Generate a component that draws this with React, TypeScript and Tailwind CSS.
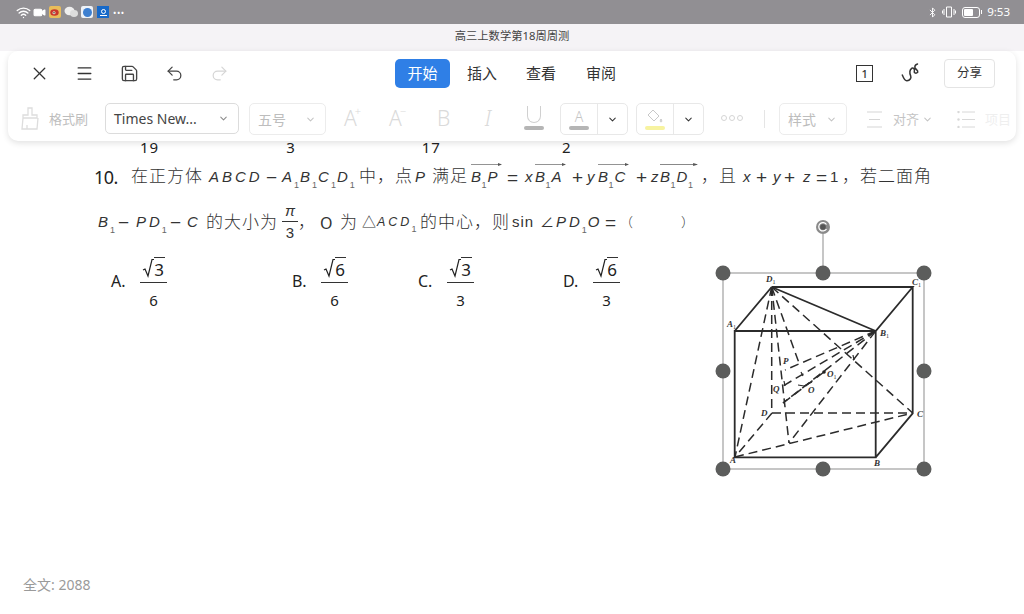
import { Bluetooth, ChevronDown, Menu, Redo2, Save, Undo2, Video, Wifi, X } from "lucide-react"
import type { ReactNode } from "react"

function Caret({ className = "text-[#8a8a8a]" }: { className?: string }) {
  return <ChevronDown size={11} strokeWidth={2.2} className={className} />
}

function Var({ children, className = "" }: { children: ReactNode; className?: string }) {
  return <span className={`shrink-0 italic tracking-[3px] whitespace-nowrap ${className}`}>{children}</span>
}

function Sub({ children = "1" }: { children?: ReactNode }) {
  return <span className="relative top-[6px] ml-[-1px] mr-[1px] text-[9px] not-italic tracking-normal text-[#666]">{children}</span>
}

function Op({ children, className = "" }: { children: ReactNode; className?: string }) {
  return <span className={`shrink-0 text-[19px] leading-none whitespace-nowrap ${className}`}>{children}</span>
}

function Vec({ children, className = "" }: { children: ReactNode; className?: string }) {
  return (
    <span className={`relative shrink-0 italic tracking-[1.5px] whitespace-nowrap ${className}`}>
      {children}
      <svg className="absolute left-0 top-[-4px] h-[5px] w-full" preserveAspectRatio="none" viewBox="0 0 31 5">
        <path d="M0 2.500H30" stroke="#666" strokeWidth="0.7" fill="none" />
        <path d="M27 1l4 1.500-4 1.500z" fill="#555" />
      </svg>
    </span>
  )
}

function Cjk({ children, className = "" }: { children: ReactNode; className?: string }) {
  return <span className={`shrink-0 text-[17px] font-light tracking-[1px] whitespace-nowrap ${className}`}>{children}</span>
}

function Root({ n }: { n: string }) {
  return (
    <span className="flex items-start text-[17px] leading-[22px]">
      <svg width="12" height="22" viewBox="0 0 12 22">
        <path d="M1 13l2-1 3 7L10 2.500h2" fill="none" stroke="#222" strokeWidth="1.200" />
      </svg>
      <span className="h-[22px] border-t border-[#333] pr-[1px] pt-[1px] leading-[21px]">{n}</span>
    </span>
  )
}

function Option({ label, n, d, labelW, className = "" }: { label: string; n: string; d: string; labelW: string; className?: string }) {
  return (
    <div className={`flex items-start ${className}`}>
      <span className={`pt-[13px] text-[16px] leading-[22px] ${labelW}`}>{label}</span>
      <div className="flex w-[27px] flex-col items-center">
        <div className="flex w-full justify-center border-b border-[#333] pb-[3px]">
          <Root n={n} />
        </div>
        <span className="text-[15px] leading-[34px]">{d}</span>
      </div>
    </div>
  )
}

function Figure() {
  const dashed = [
    "M771.700 287L735 457", "M771.700 287V413", "M771.700 287L789 443", "M771.700 287L799 363", "M771.700 287L912.700 413",
    "M875.700 331L783 386", "M875.700 331L785 370", "M875.700 331L783 403", "M875.700 331L789 443",
    "M772 413H912.700", "M772 413L735 457", "M735 457L912.700 413", "M783 403L824 372",
  ]
  const solid = "M771.700 287H912.700L875.700 331H734.700V457.300H875.700V331M771.700 287L734.700 331M771.700 287L875.700 331M912.700 287V413.300L875.700 457.300"
  const handles = [[723, 273], [823, 273], [924, 273], [723, 371], [924, 371], [723, 469], [823, 469], [924, 469]]
  const labels: [string, string, number, number][] = [
    ["D", "1", 766, 282], ["A", "1", 727, 327], ["C", "1", 912, 285], ["B", "1", 880, 336], ["P", "", 783, 364], ["Q", "", 773, 392],
    ["O", "1", 827, 377], ["O", "", 808, 393], ["D", "", 761, 416], ["C", "", 917, 417], ["A", "", 730, 463], ["B", "", 874, 466],
  ]
  return (
    <svg className="absolute left-[700px] top-[74px] h-[265px] w-[250px]" viewBox="700 215 250 265">
      <path d="M723 273H924V469H723zM823 234V273" fill="none" stroke="#8d8d8d" strokeWidth="1" />
      <path d={solid} fill="none" stroke="#2b2b2b" strokeWidth="1.800" />
      {dashed.map((d) => (
        <path key={d} d={d} fill="none" stroke="#2b2b2b" strokeWidth="1.500" strokeDasharray="9 5" />
      ))}
      <path d="M798 385l6 1 8-4M784 381l1 5M801 372l2 4M853 355l1 5" fill="none" stroke="#2b2b2b" strokeWidth="1.200" />
      <circle cx="824" cy="372" r="1.800" fill="#222" />
      {labels.map(([t, s, x, y], i) => (
        <text key={i} x={x} y={y} fontSize="9" fontStyle="italic" fontWeight="bold" fontFamily="Liberation Serif" fill="#333">
          {t}
          {s && <tspan dy="2" fontSize="6" fontStyle="normal" fontWeight="normal">{s}</tspan>}
        </text>
      ))}
      {handles.map(([x, y]) => (
        <circle key={`${x}-${y}`} cx={x} cy={y} r="7.500" fill="#5c5d5c" />
      ))}
      <circle cx="823" cy="227" r="7" fill="#8a8a8a" />
      <path d="M826.500 229a4.200 4.200 0 1 1 0-4.500" fill="none" stroke="#fff" strokeWidth="1.200" />
      <circle cx="823" cy="227" r="2.800" fill="#555" />
    </svg>
  )
}

export default function App() {
  return (
    <div className="flex h-[614px] w-[1024px] flex-col overflow-hidden bg-white text-[#222] [font-family:'Noto_Sans','Noto_Sans_CJK_SC',sans-serif]">
      {/* status bar */}
      <div className="flex h-[24px] shrink-0 items-center bg-[#918f93] pl-[16px] pr-[14px] text-white">
        <Wifi size={15} strokeWidth={2.200} />
        <Video size={13} fill="white" className="ml-[2px]" />
        <span className="ml-[3px] flex h-[12px] w-[12px] items-center justify-center rounded-[2px] bg-[#e9bd5a]">
          <svg width="10" height="8" viewBox="0 0 10 8">
            <ellipse cx="4.500" cy="4.500" rx="4.200" ry="3.200" fill="#c8352c" />
            <circle cx="4" cy="4.800" r="1.500" fill="#f5e6d0" />
            <circle cx="4" cy="4.800" r=".7" fill="#222" />
          </svg>
        </span>
        <svg className="ml-[3px]" width="14" height="12" viewBox="0 0 14 12">
          <ellipse cx="5.500" cy="5" rx="5" ry="4.200" fill="#eee" />
          <ellipse cx="10" cy="7.500" rx="4" ry="3.400" fill="#ddd" />
        </svg>
        <span className="ml-[3px] flex h-[12px] w-[12px] items-center justify-center rounded-[2px] bg-[#eef2f8]">
          <span className="h-[9px] w-[9px] rounded-full bg-[#3d7fd0]" />
        </span>
        <span className="ml-[4px] flex h-[12px] w-[12px] flex-col items-center justify-center gap-[1px] bg-[#1769c9]">
          <span className="h-[5px] w-[5px] rounded-full border border-white" />
          <span className="h-px w-[7px] bg-white" />
        </span>
        <span className="ml-[4px] text-[9px] leading-none tracking-[0.500px]">•••</span>
        <div className="ml-auto flex items-center">
          <Bluetooth size={11} strokeWidth={2} />
          <svg className="ml-[4px]" width="14" height="12" viewBox="0 0 14 12">
            <path d="M4.500 1h5v10h-5zM2 3v6M12 3v6M.5 4.500v3M13.500 4.500v3" fill="none" stroke="white" strokeWidth="1" />
          </svg>
          <span className="ml-[6px] flex h-[11px] w-[18px] items-center rounded-[3px] border border-white p-[1px]">
            <span className="h-full w-[9px] rounded-[1px] bg-white" />
          </span>
          <span className="ml-[1px] h-[4px] w-[1px] bg-white" />
          <span className="ml-[5px] text-[11.500px] leading-none">9:53</span>
        </div>
      </div>

      {/* title */}
      <div className="flex h-[27px] shrink-0 items-center justify-center bg-[#f5f3f6] pb-[3px] text-[11.300px] text-[#444]">
        高三上数学第18周周测
      </div>

      {/* toolbar */}
      <div className="z-10 mx-[8px] flex h-[90px] shrink-0 flex-col rounded-[10px] bg-white shadow-[0_2px_6px_rgba(0,0,0,0.12)]">
        <div className="flex h-[44px] items-center pl-[9px]">
          <span className="flex w-[45px] justify-center"><X size={21} strokeWidth={1.500} className="text-[#333]" /></span>
          <span className="flex w-[45px] justify-center"><Menu size={19} strokeWidth={1.600} className="text-[#333]" /></span>
          <span className="flex w-[45px] justify-center"><Save size={19} strokeWidth={1.700} className="text-[#444]" /></span>
          <span className="flex w-[45px] justify-center"><Undo2 size={19} strokeWidth={1.600} className="text-[#444]" /></span>
          <span className="flex w-[45px] justify-center"><Redo2 size={19} strokeWidth={1.500} className="text-[#d5d5d5]" /></span>
          <div className="ml-[153px] flex h-[29px] w-[55px] items-center justify-center rounded-[5px] bg-[#2f7fe6] text-[15px] text-white">开始</div>
          <span className="ml-[17px] text-[15px] text-[#333]">插入</span>
          <span className="ml-[29px] text-[15px] text-[#333]">查看</span>
          <span className="ml-[30px] text-[15px] text-[#333]">审阅</span>
          <span className="ml-[240px] flex h-[17px] w-[17px] items-center justify-center border-[1.500px] border-[#333] text-[11px] font-medium leading-none text-[#333]">1</span>
          <svg className="ml-[28px]" width="20" height="20" viewBox="0 0 20 20">
            <path d="M1.300 12C2.500 15 4 18 6 17.700 9 17.500 10.500 15 9.700 13 8.500 10 8.500 7 10.700 5.300 12.500 4.500 14 6 13.300 8.500 13 10.500 15.500 10.500 16.700 9.300 17.500 7.500 15 6.500 14 5 13.500 3 15 1.500 16.500 1" fill="none" stroke="#333" strokeWidth="1.500" strokeLinecap="round" />
          </svg>
          <span className="ml-[23px] flex h-[29px] w-[51px] items-center justify-center rounded-[4px] border border-[#e4e4e4] text-[12.500px] text-[#333]">分享</span>
        </div>

        <div className="flex h-[46px] items-start pl-[11px] pt-[8px]">
          <svg className="mt-[4px] shrink-0" width="22" height="24" viewBox="0 0 22 24">
            <path d="M9 1h4v7h5v3H4V8h5zM4 11l-1 11h15l1-11M8 22v-4" fill="none" stroke="#ddd" strokeWidth="1.300" />
          </svg>
          <span className="ml-[8px] mt-[7px] shrink-0 text-[13px] text-[#bdbdbd]">格式刷</span>
          <div className="ml-[17px] flex h-[31px] w-[134px] shrink-0 items-center justify-between rounded-[5px] border border-[#dcdcdc] pl-[8px] pr-[9px] text-[14px] text-[#444]">
            Times New...
            <Caret />
          </div>
          <div className="ml-[10px] flex h-[32px] w-[77px] shrink-0 items-center justify-between rounded-[5px] border border-[#ececec] pl-[8px] pr-[9px] text-[14px] text-[#bdbdbd]">
            五号
            <Caret className="text-[#c4c4c4]" />
          </div>
          <span className="ml-[18px] mt-[3px] flex w-[21px] shrink-0 text-[21px] font-light leading-[24px] text-[#dadada]">A<sup className="ml-[-2px] mt-[4px] text-[11px] leading-none">+</sup></span>
          <span className="ml-[24px] mt-[3px] flex w-[21px] shrink-0 text-[21px] font-light leading-[24px] text-[#dadada]">A<sup className="ml-[-2px] mt-[4px] text-[11px] leading-none">−</sup></span>
          <span className="ml-[27px] mt-[3px] w-[13px] shrink-0 text-[21px] font-light leading-[24px] text-[#dadada]">B</span>
          <span className="ml-[31px] mt-[3px] flex w-[14px] shrink-0 justify-center text-[21px] font-light italic leading-[24px] text-[#dadada]">I</span>
          <div className="ml-[28px] mt-[3px] flex w-[21px] shrink-0 flex-col items-center">
            <span className="h-[17px] w-[14px] rounded-b-[7px] border-x border-b border-[#d0d0d0]" />
            <span className="mt-[3px] h-[4px] w-[20px] rounded-full bg-[#b5b5b5]" />
          </div>
          <div className="ml-[16px] flex h-[32px] w-[68px] shrink-0 rounded-[5px] border border-[#e8e8e8]">
            <div className="flex w-[37px] flex-col items-center justify-center border-r border-[#e8e8e8]">
              <span className="text-[14px] font-light leading-[15px] text-[#c4c4c4]">A</span>
              <span className="mt-[2px] h-[4px] w-[20px] rounded-full bg-[#b5b5b5]" />
            </div>
            <div className="flex flex-1 items-center justify-center"><Caret className="text-[#333]" /></div>
          </div>
          <div className="ml-[8px] flex h-[32px] w-[68px] shrink-0 rounded-[5px] border border-[#e8e8e8]">
            <div className="flex w-[37px] flex-col items-center justify-center border-r border-[#e8e8e8]">
              <svg width="18" height="15" viewBox="0 0 18 15">
                <path d="M2 6l5-5 6 6-5 5zM15 10c1 1.500 1 3 0 3s-1-1.500 0-3z" fill="none" stroke="#c8c8c8" strokeWidth="1" />
              </svg>
              <span className="mt-[2px] h-[4px] w-[20px] rounded-full bg-[#f7f3a0]" />
            </div>
            <div className="flex flex-1 items-center justify-center"><Caret className="text-[#333]" /></div>
          </div>
          <span className="ml-[17px] mt-[12px] flex shrink-0 gap-[2px]">
            <span className="h-[6px] w-[6px] rounded-full border border-[#d5d5d5]" />
            <span className="h-[6px] w-[6px] rounded-full border border-[#d5d5d5]" />
            <span className="h-[6px] w-[6px] rounded-full border border-[#d5d5d5]" />
          </span>
          <span className="ml-[21px] mt-[7px] h-[18px] w-px shrink-0 bg-[#e5e5e5]" />
          <div className="ml-[14px] flex h-[32px] w-[68px] shrink-0 items-center justify-between rounded-[5px] border border-[#ececec] pl-[8px] pr-[9px] text-[14px] text-[#bdbdbd]">
            样式
            <Caret className="text-[#c4c4c4]" />
          </div>
          <svg className="ml-[20px] mt-[8px] shrink-0" width="15" height="17" viewBox="0 0 15 17">
            <path d="M0 1H15M2 8.500H13M0 16H15" stroke="#d5d5d5" strokeWidth="1" />
          </svg>
          <span className="ml-[11px] mt-[7px] shrink-0 text-[13px] text-[#c4c4c4]">对齐</span>
          <Caret className="ml-[3px] mt-[11px] shrink-0 text-[#c4c4c4]" />
          <svg className="ml-[24px] mt-[8px] shrink-0" width="18" height="17" viewBox="0 0 18 17">
            <path d="M5 1H18M5 8.500H18M5 16H18" stroke="#d8d8d8" strokeWidth="1" />
            <circle cx="1.500" cy="1" r="1.200" fill="#d8d8d8" />
            <circle cx="1.500" cy="8.500" r="1.200" fill="#d8d8d8" />
            <circle cx="1.500" cy="16" r="1.200" fill="#d8d8d8" />
          </svg>
          <span className="ml-[10px] mt-[7px] shrink-0 text-[13px] text-[#efefef]">项目</span>
        </div>
      </div>

      {/* document */}
      <div className="relative flex-1 text-[#333]">
        <div className="flex h-[13px] items-center text-[15px] leading-none tracking-[1px] text-[#222]">
          <span className="ml-[140px]">19</span>
          <span className="ml-[127px]">3</span>
          <span className="ml-[126px]">17</span>
          <span className="ml-[121px]">2</span>
        </div>

        <div className="mt-[8px] flex h-[30px] items-center pl-[94px] text-[15px] [font-family:'Liberation_Sans','Noto_Sans_CJK_SC',sans-serif]">
          <span className="w-[37px] shrink-0 text-[18px] tracking-[-0.500px] text-[#222] [font-family:'Noto_Sans',sans-serif]">10.</span>
          <Cjk className="w-[78px]">在正方体</Cjk>
          <Var className="w-[57px]">ABCD</Var>
          <Op className="w-[16px]">−</Op>
          <Var className="w-[77px]">A<Sub />B<Sub />C<Sub />D<Sub /></Var>
          <Cjk className="w-[56px]">中，点</Cjk>
          <Var className="w-[17px]">P</Var>
          <Cjk className="w-[39px]">满足</Cjk>
          <Vec className="w-[31px]">B<Sub />P</Vec>
          <Op className="ml-[5px] w-[18px]">=</Op>
          <Var className="w-[10px]">x</Var>
          <Vec className="w-[31px]">B<Sub />A</Vec>
          <Op className="ml-[6px] w-[15px]">+</Op>
          <Var className="w-[11px]">y</Var>
          <Vec className="w-[31px]">B<Sub />C</Vec>
          <Op className="ml-[7px] w-[15px]">+</Op>
          <Var className="w-[9px]">z</Var>
          <Vec className="w-[38px]">B<Sub />D<Sub /></Vec>
          <Cjk className="ml-[3px] w-[42px]">，且</Cjk>
          <Var className="w-[13px]">x</Var>
          <Op className="w-[17px]">+</Op>
          <Var className="w-[11px]">y</Var>
          <Op className="w-[19px]">+</Op>
          <Var className="w-[13px]">z</Var>
          <Op className="w-[14px]">=</Op>
          <span className="w-[12px] shrink-0">1</span>
          <Cjk>，若二面角</Cjk>
        </div>

        <div className="mt-[8px] flex h-[45px] items-center pl-[98px] text-[15px] [font-family:'Liberation_Sans','Noto_Sans_CJK_SC',sans-serif]">
          <Var className="w-[20px]">B<Sub /></Var>
          <Op className="w-[18px]">−</Op>
          <Var className="w-[34px]">PD<Sub /></Var>
          <Op className="w-[17px]">−</Op>
          <Var className="w-[19px]">C</Var>
          <Cjk className="w-[76px]">的大小为</Cjk>
          <div className="flex w-[16px] shrink-0 flex-col items-center">
            <span className="text-[15px] italic leading-[20px]">π</span>
            <span className="h-px w-full bg-[#333]" />
            <span className="text-[15px] leading-[22px]">3</span>
          </div>
          <Cjk className="w-[22px]">，</Cjk>
          <span className="w-[20px] shrink-0 text-[16px] [font-family:'Noto_Sans',sans-serif]">O</span>
          <Cjk className="w-[22px]">为</Cjk>
          <span className="w-[15px] shrink-0 text-[14px]">△</span>
          <Var className="w-[43px] text-[12.500px]">ACD<Sub /></Var>
          <Cjk className="w-[92px] tracking-[0.500px]">的中心，则</Cjk>
          <span className="w-[28px] shrink-0 tracking-[1px]">sin</span>
          <span className="w-[16px] shrink-0 text-[14px]">∠</span>
          <Var className="w-[49px]">PD<Sub />O</Var>
          <Op className="w-[15px]">=</Op>
          <span className="w-[61px] shrink-0 text-[13px] font-light">（</span>
          <span className="shrink-0 text-[13px] font-light">）</span>
        </div>

        <div className="mt-[12px] flex pl-[111px] text-[#222]">
          <Option label="A." n="3" d="6" labelW="w-[29px]" />
          <Option label="B." n="6" d="6" labelW="w-[29px]" className="ml-[125px]" />
          <Option label="C." n="3" d="3" labelW="w-[29px]" className="ml-[70px]" />
          <Option label="D." n="6" d="3" labelW="w-[30px]" className="ml-[89px]" />
        </div>

        <Figure />

        <div className="absolute bottom-[22px] left-[23px] text-[14px] leading-none text-[#9a9a9a]">全文: 2088</div>
      </div>
    </div>
  )
}
